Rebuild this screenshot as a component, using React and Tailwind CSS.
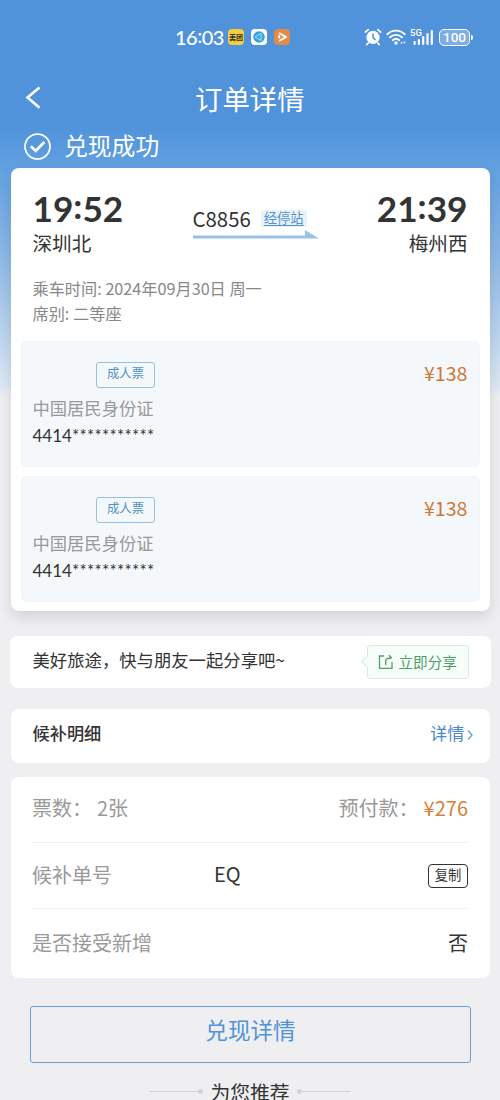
const tickets = [
  { id: 1, type: '成人票', price: '¥138', idType: '中国居民身份证', idNumber: '4414', mask: '***********' },
  { id: 2, type: '成人票', price: '¥138', idType: '中国居民身份证', idNumber: '4414', mask: '***********' },
];

function StatusBar() {
  return (
    <div className="h-[74px] flex items-center text-white pl-[175px] pr-[27px]">
      <span className="text-[20px] leading-6 font-['Lato'] font-medium w-[48px] tracking-[-0.5px] whitespace-nowrap">
        16<span className="relative -top-[2px]">:</span>03
      </span>
      <div className="flex gap-[7px] ml-[5px]">
        <span className="w-4 h-4 rounded bg-[#f3d13c] text-[#33301c] text-[7px] leading-4 font-bold text-center whitespace-nowrap">美团</span>
        <svg className="w-4 h-4" viewBox="0 0 16 16">
          <rect width="16" height="16" rx="4" fill="#fff" />
          <circle cx="8" cy="8" r="5.8" fill="#35a5dc" />
          <path d="M4 8 10 4.5V11.5Z" fill="none" stroke="#a8e2f5" strokeWidth="1" />
        </svg>
        <svg className="w-4 h-4" viewBox="0 0 16 16">
          <rect width="16" height="16" rx="4" fill="#e58a45" />
          <path d="M5.2 4 12 8 5.2 12M5.2 6.3V9.5" fill="none" stroke="#fff" strokeWidth="2" strokeLinejoin="round" />
        </svg>
      </div>
      <div className="flex items-center ml-auto">
        <svg className="w-[18px] h-[18px]" viewBox="0 0 18 18" fill="none">
          <circle cx="9" cy="9.4" r="6.6" fill="#fff" />
          <path d="M1.4 4.2 4.2 1.6M16.6 4.2 13.8 1.6M4.2 15 2.8 16.6M13.8 15 15.2 16.6" stroke="#fff" strokeWidth="1.7" strokeLinecap="round" />
          <path d="M9 5.5V9.6L11.5 12" stroke="#5093db" strokeWidth="1.5" />
        </svg>
        <svg className="w-[21px] h-[18px] ml-[4px]" viewBox="0 0 21 18" fill="none">
          <path d="M1.3 6.2C6.2 1.4 13.8 1.4 18.7 6.2M4 9.3C7.4 6.1 12.6 6.1 16 9.3M6.8 12.2C8.7 10.5 11.3 10.5 13.2 12.2" stroke="#fff" strokeWidth="1.9" strokeLinecap="round" />
          <circle cx="10" cy="15" r="1.7" fill="#fff" />
          <path d="M14.2 15.5 15.6 13.8 17 15.5ZM17 13.8H19.8L18.4 15.5Z" fill="#fff" />
        </svg>
        <div className="relative w-[24px] h-[18px] ml-[3px]">
          <span className="absolute left-0 top-0 text-[9.5px] leading-[10px] font-medium font-['Roboto']">5G</span>
          <svg className="w-[24px] h-[18px]" viewBox="0 0 24 18" fill="#fff">
            <rect x="3.5" y="13" width="2.2" height="4" rx="1" />
            <rect x="7.8" y="11" width="2.2" height="6" rx="1" />
            <rect x="12.1" y="8" width="2.2" height="9" rx="1" />
            <rect x="16.4" y="5" width="2.2" height="12" rx="1" />
            <rect x="20.7" y="2" width="2.2" height="15" rx="1" />
          </svg>
        </div>
        <div className="flex items-center ml-[5px]">
          <span className="w-[31px] h-[17px] rounded-[5px] border-[1.5px] border-white bg-white/25 font-['Roboto'] text-[13.5px] leading-[15px] font-medium text-center">100</span>
          <span className="w-[2px] h-[5px] ml-[1px] rounded-r bg-white" />
        </div>
      </div>
    </div>
  );
}

function Header() {
  return (
    <div className="text-white">
      <div className="h-12 flex items-center pl-[25px]">
        <svg className="w-[16px] h-[24px]" viewBox="0 0 16 24" fill="none">
          <path d="M14.5 1.5 2.5 11.5 14.5 21.8" stroke="#fff" strokeWidth="2.6" />
        </svg>
        <h1 className="text-[27.4px] leading-10 ml-[154px]">订单详情</h1>
      </div>
      <div className="h-[46px] flex items-center pl-[24px]">
        <svg className="w-[27px] h-[27px] mt-[3px]" viewBox="0 0 26 26" fill="none" stroke="#fff">
          <circle cx="13" cy="13" r="12" strokeWidth="1.7" />
          <path d="M6.5 12.8 11.3 17.2 19.6 8.7" strokeWidth="2.6" />
        </svg>
        <p className="text-[23.8px] leading-8 ml-[13px] pb-px">兑现成功</p>
      </div>
    </div>
  );
}

function Ticket({ ticket }) {
  return (
    <div className="h-[126.5px] rounded-md bg-[#f4f8fb] border border-[#f0f5f7] px-[11px] pt-[20px]">
      <div className="flex justify-between items-center h-[26px]">
        <span className="ml-[63.5px] w-[59px] h-[26px] rounded-[3px] border-[1.5px] border-[#96bfe0] text-[#4f93c8] text-[12.3px] leading-[20px] text-center">
          {ticket.type}
        </span>
        <span className="text-[19.6px] leading-6 pb-[3px] text-[#ce7a38]">{ticket.price}</span>
      </div>
      <p className="mt-[6px] text-[17.3px] leading-7 text-[#999]">{ticket.idType}</p>
      <p className="text-[17px] leading-7 text-[#333] font-['Lato']">
        {ticket.idNumber}<span className="tracking-[0.27px]">{ticket.mask}</span>
      </p>
    </div>
  );
}

function StationTime({ hour, minute }) {
  return (
    <p className="text-[35.2px] leading-10 font-bold font-['Lato']">
      {hour}<span className="relative -top-[3px]">:</span>{minute}
    </p>
  );
}

function TripCard() {
  return (
    <div className="mx-[10.5px] h-[443px] rounded-lg bg-white shadow-[0_6px_14px_rgba(0,0,0,0.12)] px-[10px] pt-[20px]">
      <div className="flex justify-between px-[12px] text-[#333]">
        <div>
          <StationTime hour="19" minute="52" />
          <p className="text-[19.6px] leading-[30px]">深圳北</p>
        </div>
        <div className="pt-[16px] ml-[11px]">
          <div className="flex items-center h-7">
            <span className="text-[20.4px] leading-7">C8856</span>
            <span className="ml-[10px] px-[3px] h-[17px] bg-[#eaf2fa] text-[13.3px] leading-[15px] text-[#4f93cf] underline underline-offset-2">经停站</span>
          </div>
          <svg className="w-[126px] h-[9px] mt-[-2px]" viewBox="0 0 126 9" fill="#9cc0e8">
            <path d="M0 5.5H112V0L126 8.5H0Z" />
          </svg>
        </div>
        <div className="text-right">
          <StationTime hour="21" minute="39" />
          <p className="text-[19.6px] leading-[30px]">梅州西</p>
        </div>
      </div>
      <div className="px-[12px] mt-[18px] text-[16.2px] leading-[25px] text-[#888]">
        <p>乘车时间: 2024年09月30日 周一</p>
        <p>席别: 二等座</p>
      </div>
      <div className="mt-[14.5px] flex flex-col gap-[8.5px]">
        {tickets.map((t) => (
          <Ticket key={t.id} ticket={t} />
        ))}
      </div>
    </div>
  );
}

function ShareBar() {
  return (
    <div className="mt-[25px] mx-[9.5px] h-[52px] rounded-lg bg-white flex justify-between items-center pl-[23px] pr-[22px]">
      <p className="text-[17.35px] leading-7 text-[#333] pb-[5px]">美好旅途，快与朋友一起分享吧~</p>
      <button className="relative w-[102px] h-[34px] rounded-[3px] border-[1.5px] border-[#d9ebe1] bg-[#f7fdf9] flex items-center pl-[10px] text-[#4aa069]">
        <span className="absolute left-[-5px] top-[11px] w-[9px] h-[9px] rotate-45 border-l-[1.5px] border-b-[1.5px] border-[#d9ebe1] bg-[#f7fdf9]" />
        <svg className="w-[16px] h-[16px]" viewBox="0 0 16 16" fill="none" stroke="#4aa069" strokeWidth="1.3">
          <path d="M6 2H1.5V14.3H14V8M11.8 14.3H14V11" />
          <path d="M7.7 11V7C7.7 5 9.5 4 13.6 4M10.8 1.2 13.8 4" />
        </svg>
        <span className="ml-[5px] text-[14.6px] leading-6 whitespace-nowrap">立即分享</span>
      </button>
    </div>
  );
}

function OrderInfo() {
  return (
    <div className="mt-[14px] mx-[10.5px] h-[201px] rounded-lg bg-white px-[21.5px] text-[20px] leading-7 text-[#999]">
      <div className="h-[66px] flex justify-between items-center pb-[4px] border-b border-[#f1f1f1]">
        <span>票数：<span className="ml-[5px]">2张</span></span>
        <span>预付款：<span className="ml-[5px] text-[#d57f3a]">¥276</span></span>
      </div>
      <div className="h-[66px] flex items-center border-b border-[#f1f1f1]">
        <span className="w-[182px] pb-[2px]">候补单号</span>
        <span className="text-[#333] pb-[3px]">EQ</span>
        <span className="ml-auto w-[40px] h-[24px] rounded-[4px] border-[1.5px] border-[#333] text-[#333] text-[13.3px] leading-[19px] text-center">复制</span>
      </div>
      <div className="h-[67px] flex justify-between items-center">
        <span>是否接受新增</span>
        <span className="text-[#333]">否</span>
      </div>
    </div>
  );
}

export default function App() {
  return (
    <div className="w-[500px] h-[1100px] overflow-hidden bg-[#efeff1] font-['Noto_Sans_CJK_SC',sans-serif]">
      <div className="bg-[linear-gradient(to_bottom,#5093db_0px,#5093db_125px,#62a1e1_170px,#8ab6e5_250px,#b9d3ee_330px,#dce7f3_385px,#efeff1_396px)]">
        <StatusBar />
        <Header />
        <TripCard />
      </div>
      <ShareBar />
      <div className="mt-[21px] mx-[10.5px] h-[54px] rounded-lg bg-white flex justify-between items-center pl-[22px] pr-[16px] pb-[6px] text-[17.2px] leading-7">
        <span className="text-[#333] font-medium">候补明细</span>
        <span className="flex items-center text-[#4a8ac8]">
          详情
          <svg className="w-[8px] h-[12px] ml-px mt-[3px]" viewBox="0 0 8 12" fill="none">
            <path d="M2 1.5 6 6 2 10.5" stroke="#6da0d0" strokeWidth="1.4" />
          </svg>
        </span>
      </div>
      <OrderInfo />
      <button className="block mt-[27.5px] ml-[30px] w-[441px] h-[57px] rounded-[3px] border-[1.5px] border-[#6b9fd4] text-[#5193d8] text-[22.6px] leading-8 pb-[9px]">
        兑现详情
      </button>
      <div className="mt-[14px] flex justify-center items-center text-[#333]">
        <span className="w-[49px] h-px bg-[#d3d3d5]" />
        <span className="w-[5px] h-[5px] rounded-full bg-[#d3d3d5]" />
        <span className="mx-[7px] text-[19.8px] leading-[30px]">为您推荐</span>
        <span className="w-[5px] h-[5px] rounded-full bg-[#d3d3d5]" />
        <span className="w-[49px] h-px bg-[#d3d3d5]" />
      </div>
    </div>
  );
}
